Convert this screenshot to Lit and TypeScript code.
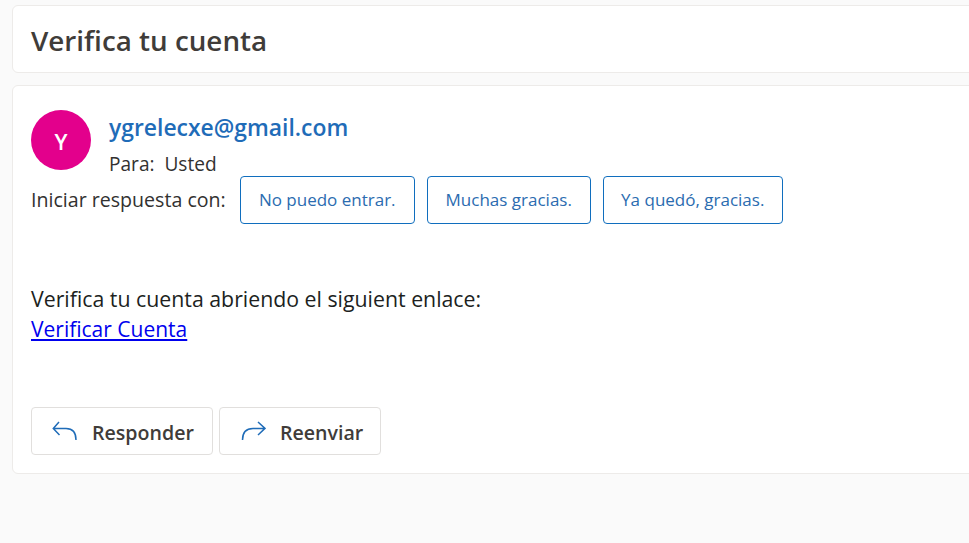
import { LitElement, html, css } from "lit";
import { customElement } from "lit/decorators.js";

@customElement("app-root")
export class AppRoot extends LitElement {
  static styles = css`
    :host {
      display: block;
      width: 969px;
      height: 543px;
      overflow: hidden;
      background: #fafafa;
      font-family: "Open Sans", "Noto Sans", sans-serif;
      color: #323130;
    }
    .wrap {
      display: flex;
      flex-direction: column;
      gap: 12px;
      padding: 5px 0 0 12px;
      width: 1000px;
      box-sizing: border-box;
    }
    .card {
      background: #fff;
      border: 1px solid #edebe9;
      border-radius: 6px;
      box-sizing: border-box;
    }
    .head {
      height: 68px;
      display: flex;
      align-items: center;
      padding: 2px 0 0 18px;
      font-size: 27.8px;
      font-weight: 600;
      color: #403c39;
    }
    .main {
      height: 389px;
      padding: 24px 18px 0;
      display: flex;
      flex-direction: column;
    }
    .from {
      display: flex;
      gap: 18px;
      height: 66px;
    }
    .avatar {
      width: 60px;
      height: 60px;
      padding-top: 2px;
      box-sizing: border-box;
      border-radius: 50%;
      background: #e3008c;
      color: #fff;
      font-size: 22px;
      font-weight: 600;
      display: flex;
      align-items: center;
      justify-content: center;
    }
    .email {
      font-size: 22.9px;
      font-weight: 600;
      color: #1f6cb8;
      line-height: 36px;
    }
    .to {
      margin-top: 6px;
      font-size: 19.1px;
      line-height: 24px;
      white-space: pre;
    }
    .quick {
      display: flex;
      align-items: center;
      gap: 12px;
      font-size: 19.6px;
    }
    .quick span {
      margin-right: 2px;
      padding-bottom: 2px;
    }
    .chip {
      height: 48px;
      padding-bottom: 2px;
      border: 1px solid #106ebe;
      border-radius: 4px;
      display: flex;
      align-items: center;
      justify-content: center;
      font-size: 17px;
      color: #2b6cb0;
      box-sizing: border-box;
    }
    .c1 { width: 175px; }
    .c2 { width: 164px; }
    .c3 { width: 180px; }
    .body {
      margin-top: 60px;
      font-size: 21.3px;
      line-height: 30px;
      color: #201f1e;
    }
    .body a {
      color: #0000ee;
      font-size: 21px;
      text-decoration: underline;
    }
    .actions {
      display: flex;
      gap: 6px;
      margin-top: 63px;
    }
    .btn {
      height: 48px;
      padding: 2px 0 0 20px;
      border: 1px solid #e1dfdd;
      border-radius: 4px;
      display: flex;
      align-items: center;
      gap: 14px;
      font-size: 19.6px;
      font-weight: 600;
      color: #403c39;
      box-sizing: border-box;
    }
    .b1 { width: 182px; }
    .b2 { width: 162px; }
    svg {
      display: block;
      width: 26px;
      height: 20px;
      margin-top: -2px;
      fill: none;
      stroke: #1f6cb8;
      stroke-width: 1.5;
    }
  `;

  render() {
    return html`<div class="wrap">
      <div class="card head">Verifica tu cuenta</div>
      <div class="card main">
        <div class="from">
          <div class="avatar">Y</div>
          <div>
            <div class="email">ygrelecxe@gmail.com</div>
            <div class="to">Para:  Usted</div>
          </div>
        </div>
        <div class="quick">
          <span>Iniciar respuesta con:</span>
          <div class="chip c1">No puedo entrar.</div>
          <div class="chip c2">Muchas gracias.</div>
          <div class="chip c3">Ya quedó, gracias.</div>
        </div>
        <div class="body">
          Verifica tu cuenta abriendo el siguient enlace:<br />
          <a href="#">Verificar Cuenta</a>
        </div>
        <div class="actions">
          <div class="btn b1">
            <svg viewBox="0 0 26 20"><path d="M7 1 L1.3 7.4 L7.5 14 M1.3 7.4 H14 C21 7.4 24 12 24 19" /></svg>
            Responder
          </div>
          <div class="btn b2">
            <svg viewBox="0 0 26 20"><path d="M18 1 L25 7.4 L18 14 M25 7.4 H13 C6 7.4 2.5 12 2.5 19" /></svg>
            Reenviar
          </div>
        </div>
      </div>
    </div>`;
  }
}
